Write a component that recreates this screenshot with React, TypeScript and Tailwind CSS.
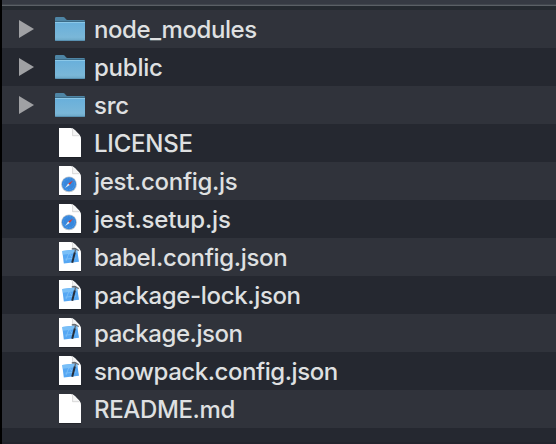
type Kind = 'folder' | 'blank' | 'js' | 'json';

const rows: { name: string; kind: Kind; tracking: string }[] = [
  { name: 'node_modules', kind: 'folder', tracking: 'tracking-[-0.44px]' },
  { name: 'public', kind: 'folder', tracking: 'tracking-[-0.22px]' },
  { name: 'src', kind: 'folder', tracking: 'tracking-[-0.3px]' },
  { name: 'LICENSE', kind: 'blank', tracking: 'tracking-[-0.22px]' },
  { name: 'jest.config.js', kind: 'js', tracking: 'tracking-[-0.3px]' },
  { name: 'jest.setup.js', kind: 'js', tracking: 'tracking-[-0.2px]' },
  { name: 'babel.config.json', kind: 'json', tracking: 'tracking-[-0.34px]' },
  { name: 'package-lock.json', kind: 'json', tracking: 'tracking-[-0.35px]' },
  { name: 'package.json', kind: 'json', tracking: 'tracking-[-0.43px]' },
  { name: 'snowpack.config.json', kind: 'json', tracking: 'tracking-[-0.45px]' },
  { name: 'README.md', kind: 'blank', tracking: 'tracking-[-0.36px]' },
];

function Folder() {
  return (
    <svg width="30" height="24" viewBox="0 0 30 24">
      <defs>
        <linearGradient id="folder-front" x1="0" y1="0" x2="0" y2="1">
          <stop offset="0" stopColor="#68afdb" />
          <stop offset=".8" stopColor="#7ab7d8" />
          <stop offset="1" stopColor="#6ba6c6" />
        </linearGradient>
      </defs>
      <path d="M0 23V1.2Q0 0 1.2 0H8.3Q9.2 0 9.8.8L11 2.3Q11.5 3 12.4 3H28.8Q30 3 30 4.2V23Z" fill="#4e85a5" />
      <path d="M0 4H30V5H0Z" fill="#3c6c88" />
      <path d="M0 5H30V23Q30 24 29 24H1Q0 24 0 23Z" fill="url(#folder-front)" />
      <path d="M0 5.5H30" stroke="#8bc8e8" strokeWidth="1" />
      <path d="M.3 23.6H29.7" stroke="#5089a8" strokeWidth=".8" />
    </svg>
  );
}

function FileIcon({ kind }: { kind: Kind }) {
  return (
    <svg width="22" height="29" viewBox="0 0 22 29" className="overflow-visible">
      <path d="M0 0H11.5Q14 0 16 2.2L20.2 6.6Q22 8.6 22 11V29H0Z" fill="#fff" />
      <path d="M13.4 .2V7.8H21.2L16 2.2Z" fill="#f5f5f5" />
      <path d="M13.6 1.2V7.7H20.6" fill="none" stroke="#cfcfcf" strokeWidth=".8" />
      <path d="M0 29.5H22" stroke="#15171c" strokeOpacity=".5" />
      {kind === 'js' && (
        <g>
          <circle cx="10" cy="18.3" r="7.9" fill="#b9c4ce" />
          <circle cx="10" cy="18.2" r="7" fill="#3787dd" />
          <circle cx="10" cy="18.2" r="5.6" fill="none" stroke="#5fa9ec" strokeWidth=".8" strokeDasharray=".6 1" />
          <path d="M14 14.4L10.7 18.9L9.2 17.4Z" fill="#dc3a34" />
          <path d="M6 22.1L9.2 17.4L10.7 18.9Z" fill="#e4ebf0" />
        </g>
      )}
      {kind === 'json' && (
        <g>
          <path d="M3.3 9L18 7.2L20 19.8L4.8 21.6Z" fill="#56a7f3" />
          <path d="M3.3 9L18 7.2L18.6 11L3.9 12.8Z" fill="#79bff7" />
          <path d="M7 19L10 11L15 18M6.3 17.2L17 16" fill="none" stroke="#7cbff8" strokeWidth=".9" />
          <path d="M16.6 7.4L15.7 11" stroke="#626a74" strokeWidth="1.3" />
          <path d="M15.8 10.5L13.2 20.8" stroke="#252d3a" strokeWidth="2" />
          <path d="M12.6 6.6Q14.5 5.2 16.8 6L20 8.4L19.5 9.2L16.8 7.6L13 7.4Z" fill="#686d72" />
        </g>
      )}
    </svg>
  );
}

export default function App() {
  return (
    <div className="flex h-[444px] w-[556px] flex-col overflow-hidden border-l-2 border-black bg-[#252830] font-['Inter',sans-serif]">
      <div className="h-1 shrink-0 bg-[#363a43]" />
      <div className="h-px shrink-0 bg-[#41464d]" />
      <div className="h-px shrink-0 bg-[#5b6066]" />
      <div className="h-1 shrink-0 bg-[#252a30]" />
      {rows.map((row) => (
        <div key={row.name} className="flex h-[38px] shrink-0 items-start odd:bg-[#30333b] even:bg-[#252830]">
          <div className="w-[51px] shrink-0 pt-[10px] pl-[17px]">
            {row.kind === 'folder' && (
              <svg width="15" height="18" viewBox="0 0 15 18">
                <path d="M0 0L15 9L0 18Z" fill="#a0a1a4" />
              </svg>
            )}
          </div>
          <div className="flex w-[41px] shrink-0 pl-[2px]">
            {row.kind === 'folder' ? (
              <div className="pt-[7px]"><Folder /></div>
            ) : (
              <div className="pt-[4px] pl-[4px]"><FileIcon kind={row.kind} /></div>
            )}
          </div>
          <span className={`whitespace-pre text-[24px] leading-[40px] font-[450] text-[#dfe0e1] ${row.tracking}`}>{row.name}</span>
        </div>
      ))}
      <div className="h-[14px] shrink-0 bg-[#252830]" />
      <div className="h-[2px] shrink-0 bg-[#23242d]" />
    </div>
  );
}
